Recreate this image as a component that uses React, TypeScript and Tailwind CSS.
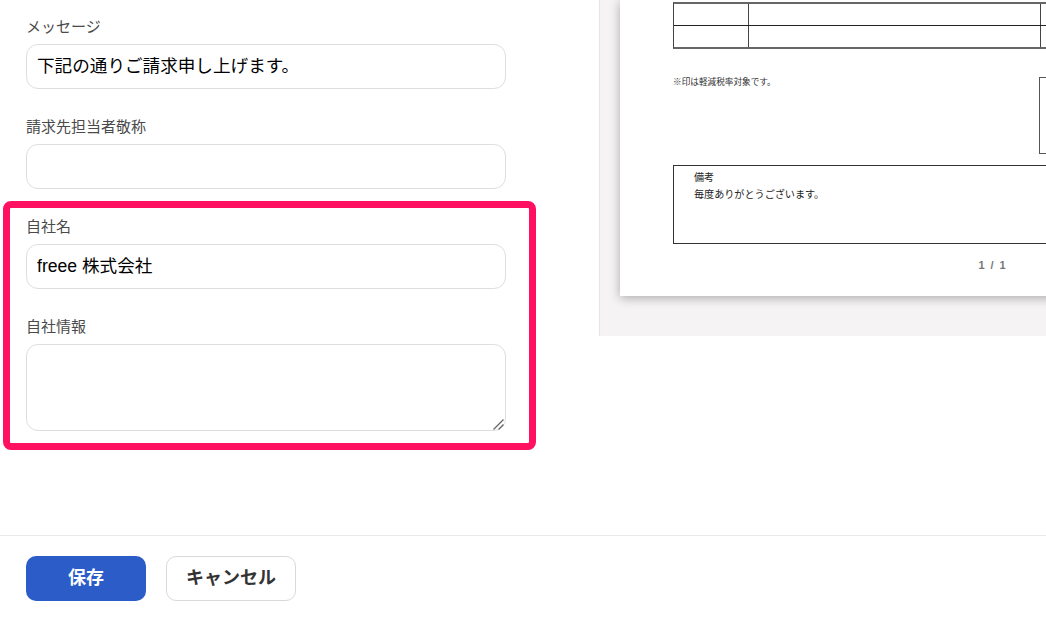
const jp = "font-['Liberation_Sans','Noto_Sans_CJK_JP',sans-serif]";

function Field({ label, value }: { label: string; value?: string }) {
  return (
    <div className="flex flex-col">
      <label className="mb-2 h-5 pt-px text-[15px] leading-5 text-[#4a4a4a]">{label}</label>
      <input
        readOnly
        value={value ?? ""}
        className="h-[45px] w-full rounded-xl border border-[#dedede] bg-white pb-[5px] pl-[10px] pr-[11px] text-[17.6px] text-black outline-none"
      />
    </div>
  );
}

export default function App() {
  return (
    <div className={`${jp} flex h-[618px] w-[1046px] flex-col overflow-hidden bg-white`}>
      <div className="relative flex h-[535px] shrink-0">
        {/* Form */}
        <div className="flex w-[599px] shrink-0 flex-col gap-[27px] pl-[26px] pr-[93px] pt-4">
          <Field label="メッセージ" value="下記の通りご請求申し上げます。" />
          <Field label="請求先担当者敬称" />
          <Field label="自社名" value="freee 株式会社" />
          <div className="flex flex-col">
            <label className="mb-2 h-5 pt-px text-[15px] leading-5 text-[#4a4a4a]">自社情報</label>
            <div className="relative h-[87px]">
              <textarea
                readOnly
                className="block h-full w-full resize-none rounded-xl border border-[#dedede] bg-white px-[11px] py-2 text-[17.6px] outline-none"
              />
              <svg className="absolute right-[2px] bottom-[1px] h-[11px] w-[11px]" viewBox="0 0 11 11" fill="none" stroke="#666" strokeWidth="1.3">
                <path d="M0.5 10.5L10.5 0.5" />
                <path d="M5.5 10.5L10.5 5.5" />
              </svg>
            </div>
          </div>
        </div>

        {/* Preview */}
        <div className="h-[336px] flex-1 overflow-hidden border-l border-[#e6e4e4] bg-[#f5f3f3] pl-5">
          <div className="h-[296px] w-[600px] bg-white pl-[53px] pt-[2px] shadow-[0_2px_10px_rgba(0,0,0,0.3)]">
            <div className="w-[500px] border-x border-b-2 border-t-2 border-x-[#444] border-b-[#666] border-t-[#666]">
              <div className="flex h-[22px] border-b border-[#222]">
                <div className="w-[75px] border-r border-[#444]" />
                <div className="w-[292px] border-r border-[#444]" />
              </div>
              <div className="flex h-[21px]">
                <div className="w-[75px] border-r border-[#444]" />
                <div className="w-[292px] border-r border-[#444]" />
              </div>
            </div>
            <div className="flex h-[116px] items-start">
              <p className="mt-[27px] w-[366px] text-[8.65px] leading-3 text-[#333]">※印は軽減税率対象です。</p>
              <div className="mt-[28px] h-[77px] w-[60px] border border-[#555]" />
            </div>
            <div className="h-[79px] w-[500px] border border-[#333] pl-5 text-[10.1px] leading-[17px] text-[#222]">
              <p className="mt-[3px]">備考</p>
              <p>毎度ありがとうございます。</p>
            </div>
            <p className="mt-[13px] w-[334px] text-right text-[11px] font-bold leading-4 tracking-[1.4px] text-[#777]">1 / 1</p>
          </div>
        </div>

        {/* Highlight frame */}
        <div className="pointer-events-none absolute left-[3px] top-[201px] h-[249px] w-[533px] rounded-lg border-[7px] border-[#ff1060]" />
      </div>

      {/* Footer */}
      <div className="flex flex-1 items-start gap-5 border-t border-[#e8e8e8] pl-[26px] pt-5">
        <button className="h-[45px] w-[120px] rounded-[10px] bg-[#2b5cc8] text-[18px] font-bold text-white">保存</button>
        <button className="h-[45px] w-[130px] rounded-[10px] border border-[#d9d9d9] bg-white text-[18px] font-bold text-[#333]">キャンセル</button>
      </div>
    </div>
  );
}
